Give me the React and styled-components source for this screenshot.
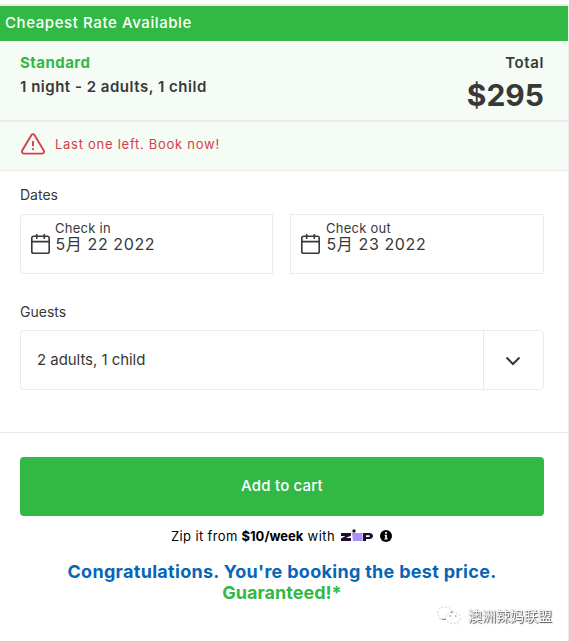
import React from "react";
import styled, { createGlobalStyle } from "styled-components";

const GREEN = "#32b845";
const INK = "#383838";
const LINE = "#ebebeb";

const Global = createGlobalStyle`
  *, *::before, *::after { box-sizing: border-box; }
  body { margin: 0; background: #fff; overflow: hidden; }
`;

const Card = styled.main`
  width: 569px;
  height: 641px;
  padding-top: 4px;
  background: #fff;
  color: ${INK};
  font-family: Inter, "Noto Sans CJK SC", sans-serif;
  display: flex;
  flex-direction: column;
`;

const Panel = styled.section`
  flex: 1;
  border-top: 2px solid ${LINE};
  border-right: 1px solid ${LINE};
  display: flex;
  flex-direction: column;
  white-space: nowrap;
`;

const Banner = styled.header`
  height: 35px;
  padding-left: 5px;
  background: ${GREEN};
  color: #fff;
  font-size: 15px;
  font-weight: 500;
  line-height: 33px;
  letter-spacing: 0.59px;
`;

const Summary = styled.div`
  height: 81px;
  padding: 10px 24px 0 20px;
  display: flex;
  justify-content: space-between;
  background: #f5fcf6;
  border-bottom: 2px solid ${LINE};
  font-size: 15px;
  font-weight: 600;
  line-height: 24px;
`;

const RateName = styled.div`
  color: ${GREEN};
  font-weight: 700;
  letter-spacing: 0.45px;
`;

const Stay = styled.div`
  letter-spacing: 0.51px;
`;

const TotalColumn = styled.div`
  text-align: right;
`;

const TotalLabel = styled.div`
  letter-spacing: 0.6px;
`;

const Price = styled.div`
  margin-top: 1px;
  font-size: 30px;
  font-weight: 700;
  line-height: 38px;
`;

const Alert = styled.div`
  height: 49px;
  padding: 0 0 4px 20px;
  display: flex;
  align-items: center;
  gap: 9px;
  background: #f5fcf6;
  border-bottom: 1px solid ${LINE};
  color: #d43f4a;
  font-size: 13px;
  letter-spacing: 0.73px;
`;

const AlertText = styled.span`
  padding-bottom: 1px;
`;

const Form = styled.div`
  height: 262px;
  padding: 14px 24px 0 20px;
  border-bottom: 1px solid ${LINE};
`;

const Label = styled.div`
  height: 29px;
  font-size: 14px;
  line-height: ${(p) => p.$leading};
`;

const Dates = styled.div`
  display: grid;
  grid-template-columns: 253px 254px;
  column-gap: 17px;
  margin-bottom: 27px;
`;

const DateBox = styled.div`
  height: 60px;
  padding: 6px 0 0 8.5px;
  display: flex;
  gap: ${(p) => (p.$first ? "4.5px" : "5.5px")};
  border: 1px solid ${LINE};
  border-radius: ${(p) => (p.$first ? "4px 0 0 4px" : "0")};
  svg { margin-top: 12px; flex: none; }
`;

const DateCaption = styled.div`
  font-size: 13px;
  line-height: 15px;
  letter-spacing: 0.25px;
`;

const DateValue = styled.div`
  padding-left: 0.5px;
  font-size: 16px;
  line-height: 16px;
  letter-spacing: 0.6px;
`;

const Select = styled.div`
  height: 60px;
  display: flex;
  border: 1px solid ${LINE};
  border-radius: 4px;
`;

const SelectValue = styled.div`
  flex: 1;
  padding-left: 16px;
  font-size: 15px;
  line-height: 58px;
  letter-spacing: -0.05px;
`;

const SelectToggle = styled.div`
  width: 60px;
  height: 60px;
  padding-right: 2px;
  border-left: 1px solid ${LINE};
  display: grid;
  place-items: center;
`;

const Footer = styled.footer`
  flex: 1;
  padding: 24px 24px 0 20px;
`;

const CartButton = styled.button`
  display: block;
  width: 100%;
  height: 59px;
  padding: 0 0 2px;
  border: 0;
  border-radius: 4px;
  background: ${GREEN};
  color: #fff;
  font: 500 15px Inter, sans-serif;
  letter-spacing: 0.2px;
`;

const ZipLine = styled.div`
  height: 40px;
  padding-left: 151px;
  display: flex;
  align-items: center;
  color: #000;
  font-size: 13px;
  svg { flex: none; }
`;

const ZipLead = styled.span`
  width: 70.5px;
  letter-spacing: 0.36px;
`;

const ZipAmount = styled.strong`
  width: 66px;
  font-weight: 700;
`;

const ZipWith = styled.span`
  width: 32.5px;
  letter-spacing: 0.5px;
`;

const ZipBrand = styled.span`
  display: flex;
  align-items: center;
  gap: 6px;
`;

const Pledge = styled.div`
  margin-top: 5px;
  text-align: center;
  font-size: 18px;
  font-weight: 700;
  line-height: 21px;
  letter-spacing: 0.3px;
  color: #0765b7;
`;

const Guarantee = styled.div`
  color: ${GREEN};
  letter-spacing: 0;
`;

const Watermark = styled.div`
  position: fixed;
  left: 436px;
  top: 603px;
  display: flex;
  align-items: center;
  gap: 6px;
  color: #fff;
  font: 400 14px/24px "Noto Sans CJK SC", sans-serif;
  text-shadow: 1px 1px 1px #555, 0 0 1px #777;
`;

const CalendarIcon = () => (
  <svg width="21" height="22" viewBox="0 0 21 22" fill="none" stroke={INK} strokeWidth="1.6">
    <rect x="1.8" y="3.2" width="17.4" height="17" rx="1.8" />
    <path d="M1.800 8.600h17.400M6.700 1v5M14.300 1v5" />
  </svg>
);

const WarningIcon = () => (
  <svg width="26" height="24" viewBox="0 0 26 24" fill="none" stroke="#d43f4a" strokeWidth="1.9" strokeLinejoin="round">
    <path d="M11.500 2.900 2.200 18.600c-.8 1.400.1 3 1.700 3h18.200c1.600 0 2.500-1.600 1.700-3L14.500 2.900c-.7-1.100-2.300-1.100-3 0Z" />
    <path d="M13 9v5.300M13 16.200v1.800" />
  </svg>
);

const ZipLogo = () => (
  <svg width="34" height="14" viewBox="0 0 34 14">
    <path d="M1 4h10v2.400L6 9h5v3H1V9.600L5.500 7H1z" fill="#220c2e" />
    <path d="M12 4h10.500v8H13z" fill="#aa8fff" />
    <circle cx="14" cy="2" r="1.700" fill="#220c2e" />
    <path fillRule="evenodd" d="M23 4h6.500c4.700 0 4.700 6 0 6H26v2h-3zM26 6.200v1.700h3c1.200 0 1.200-1.700 0-1.700z" fill="#220c2e" />
  </svg>
);

const InfoIcon = () => (
  <svg width="12" height="12" viewBox="0 0 12 12">
    <circle cx="6" cy="6" r="6" />
    <path d="M4.600 4.700h2.300v3.900h.8v1H4.400v-1h.8V5.700h-.6zM5.100 2h1.800v1.700H5.100z" fill="#fff" />
  </svg>
);

const ChatIcon = () => (
  <svg width="26" height="22" viewBox="0 0 26 22" fill="#fff" stroke="#bbb" strokeWidth=".7" strokeDasharray="2 1.500">
    <path d="M6 14.500 3.500 16l.6-2.500C-.8 9 2.600 3 9 3c5 0 8 3.500 7.500 7" />
    <path d="M16.500 8c9 0 9.500 8 5.200 10.200l.5 2-2.300-1.200C13 20.500 9 17 9.500 13.500 10 10 13 8 16.500 8Z" />
    <path d="M6 15.300h4M14.500 8.500l2-.5M13.500 12h1.500M19 12h1.500" stroke="#777" strokeWidth="1" strokeDasharray="none" />
  </svg>
);

const DateField = ({ first, caption, value }) => (
  <DateBox $first={first}>
    <CalendarIcon />
    <div>
      <DateCaption>{caption}</DateCaption>
      <DateValue>{value}</DateValue>
    </div>
  </DateBox>
);

export default function App() {
  return (
    <Card>
      <Global />
      <Panel>
        <Banner>Cheapest Rate Available</Banner>
        <Summary>
          <div>
            <RateName>Standard</RateName>
            <Stay>1 night - 2 adults, 1 child</Stay>
          </div>
          <TotalColumn>
            <TotalLabel>Total</TotalLabel>
            <Price>$295</Price>
          </TotalColumn>
        </Summary>
        <Alert>
          <WarningIcon />
          <AlertText>Last one left. Book now!</AlertText>
        </Alert>
        <Form>
          <Label $leading="20px">Dates</Label>
          <Dates>
            <DateField first caption="Check in" value="5月 22 2022" />
            <DateField caption="Check out" value="5月 23 2022" />
          </Dates>
          <Label $leading="21px">Guests</Label>
          <Select>
            <SelectValue>2 adults, 1 child</SelectValue>
            <SelectToggle>
              <svg width="16" height="10" viewBox="0 0 16 10" fill="none" stroke={INK} strokeWidth="2">
                <path d="m1.500 1.500 6.500 6.500 6.500-6.500" />
              </svg>
            </SelectToggle>
          </Select>
        </Form>
        <Footer>
          <CartButton>Add to cart</CartButton>
          <ZipLine>
            <ZipLead>Zip it from</ZipLead>
            <ZipAmount>$10/week</ZipAmount>
            <ZipWith>with</ZipWith>
            <ZipBrand>
              <ZipLogo />
              <InfoIcon />
            </ZipBrand>
          </ZipLine>
          <Pledge>
            Congratulations. You're booking the best price.
            <Guarantee>Guaranteed!*</Guarantee>
          </Pledge>
        </Footer>
      </Panel>
      <Watermark>
        <ChatIcon />
        <span>澳洲辣妈联盟</span>
      </Watermark>
    </Card>
  );
}
